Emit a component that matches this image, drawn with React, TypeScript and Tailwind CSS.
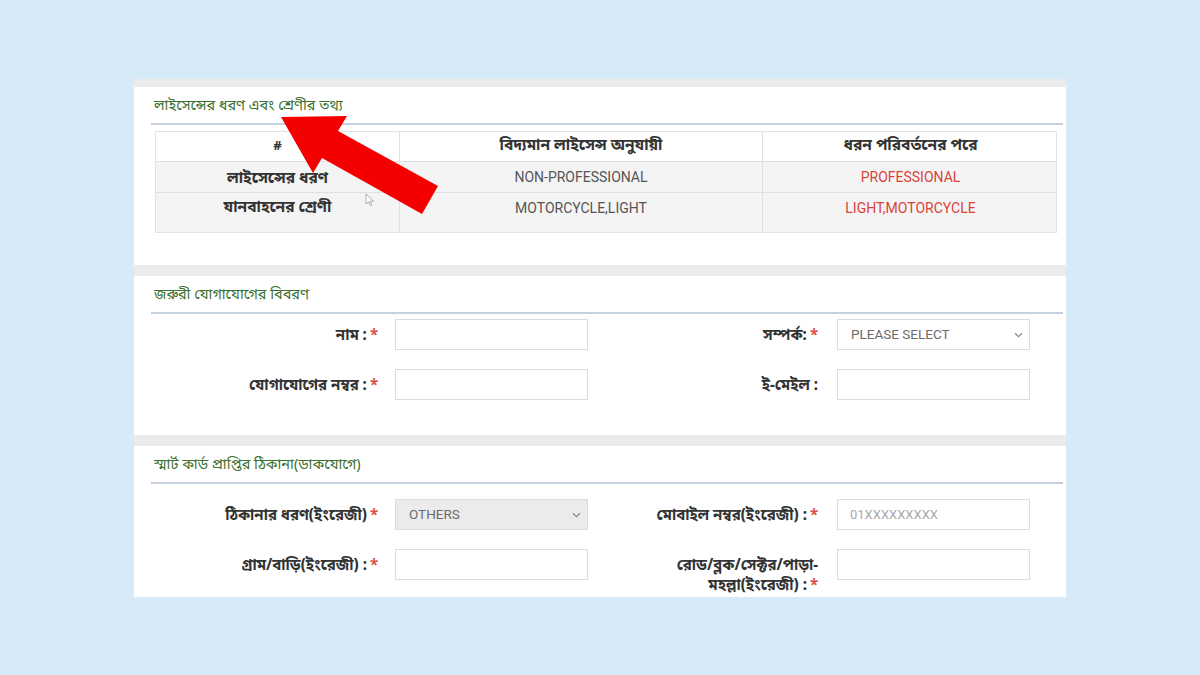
const BN = { fontFamily: '"Noto Sans Bengali","Noto Serif Bengali","Lohit Bengali","FreeSerif","Noto Sans",sans-serif' };
const LAT = { fontFamily: 'Roboto,"Liberation Sans",Arial,sans-serif' };

function Chevron() {
  return (
    <svg width="9" height="6" viewBox="0 0 9 6" className="shrink-0">
      <path d="M1 1.2 L4.5 4.6 L8 1.2" fill="none" stroke="#8a8a8a" strokeWidth="1.2" />
    </svg>
  );
}

function Req() {
  return <span className="text-[#d9534f] ml-[3px]">*</span>;
}

function Label({ children, width, req, tight }: { children: React.ReactNode; width: number; req?: boolean; tight?: boolean }) {
  return (
    <div
      className={`text-right text-[15px] font-bold text-[#333] shrink-0 ${tight ? 'leading-[20px]' : 'leading-[23px]'}`}
      style={{ ...BN, width }}
    >
      {children}
      {req && <Req />}
    </div>
  );
}

function Input({ placeholder, disabled }: { placeholder?: string; disabled?: boolean }) {
  return (
    <div
      className={`w-[193px] h-[31px] border border-[#dcdcdc] shrink-0 flex items-center px-[12px] text-[13px] ${disabled ? 'bg-[#ebebeb]' : 'bg-white'}`}
      style={LAT}
    >
      <span className="text-[#a9a9a9]">{placeholder}</span>
    </div>
  );
}

function Select({ value, disabled }: { value: string; disabled?: boolean }) {
  return (
    <div
      className={`w-[193px] h-[31px] border border-[#dcdcdc] shrink-0 flex items-center justify-between pl-[13px] pr-[6px] text-[13.5px] ${disabled ? 'bg-[#ebebeb]' : 'bg-white'}`}
      style={LAT}
    >
      <span className="text-[#6b6b6b]">{value}</span>
      <Chevron />
    </div>
  );
}

function SectionHead({ title }: { title: string }) {
  return (
    <>
      <div className="h-[36px] pt-[9px] leading-[22px] pl-[20px] text-[14.5px] text-[#3b7031]" style={BN}>
        {title}
      </div>
      <div className="ml-[17px] mr-[3px] h-[2px] bg-[#c3d2de]" />
    </>
  );
}

function FormRow({
  left,
  leftReq,
  leftField,
  right,
  rightReq,
  rightField,
  rightTight,
}: {
  left: React.ReactNode;
  leftReq?: boolean;
  leftField: React.ReactNode;
  right: React.ReactNode;
  rightReq?: boolean;
  rightField: React.ReactNode;
  rightTight?: boolean;
}) {
  return (
    <div className="flex items-start h-[31px]">
      <div className="flex items-start">
        <div className="pt-[6px]">
          <Label width={244} req={leftReq}>{left}</Label>
        </div>
        <div className="ml-[17px]">{leftField}</div>
      </div>
      <div className="flex items-start">
        <div className={rightTight ? 'pt-[7px]' : 'pt-[6px]'}>
          <Label width={230} req={rightReq} tight={rightTight}>{right}</Label>
        </div>
        <div className="ml-[19px]">{rightField}</div>
      </div>
    </div>
  );
}

export default function App() {
  const cell = 'flex items-center justify-center border-r border-[#e0e0e0]';
  return (
    <div className="relative w-[1200px] h-[675px] bg-[#d6eaf8] overflow-hidden pt-[79px] pl-[134px]">
      <div className="w-[932px] h-[518px] bg-[#ebebeb] pt-[8px] flex flex-col gap-[11px]">
        {/* Section 1 */}
        <div className="bg-white h-[178px] shrink-0">
          <SectionHead title="লাইসেন্সের ধরণ এবং শ্রেণীর তথ্য" />
          <div className="ml-[21px] mt-[6px] w-[902px] border border-[#e3e3e3]">
            <div className="grid grid-cols-[244px_363px_295px] h-[30px] bg-white border-b border-[#e0e0e0] text-[15.5px] font-bold text-[#333]" style={BN}>
              <div className={`${cell} text-[13px]`}>#</div>
              <div className={cell}>বিদ্যমান লাইসেন্স অনুযায়ী</div>
              <div className="flex items-center justify-center">ধরন পরিবর্তনের পরে</div>
            </div>
            <div className="grid grid-cols-[244px_363px_295px] h-[31px] bg-[#f4f4f4] border-b border-[#e0e0e0] text-[14px]">
              <div className={`${cell} pt-[5px] text-[15.5px] font-bold text-[#333]`} style={BN}>লাইসেন্সের ধরণ</div>
              <div className={`${cell} text-[#555]`} style={LAT}>NON-PROFESSIONAL</div>
              <div className="flex items-center justify-center text-[#d9443a]" style={LAT}>PROFESSIONAL</div>
            </div>
            <div className="grid grid-cols-[244px_363px_295px] h-[39px] bg-[#f4f4f4] text-[14px]">
              <div className={`${cell} !items-start pt-[4px] text-[15.5px] font-bold text-[#333]`} style={BN}>যানবাহনের শ্রেণী</div>
              <div className={`${cell} !items-start pt-[5px] text-[#555]`} style={LAT}>MOTORCYCLE,LIGHT</div>
              <div className="flex items-start pt-[5px] justify-center text-[#d9443a]" style={LAT}>LIGHT,MOTORCYCLE</div>
            </div>
          </div>
        </div>

        {/* Section 2 */}
        <div className="bg-white h-[159px] shrink-0">
          <SectionHead title="জরুরী যোগাযোগের বিবরণ" />
          <div className="mt-[5px] flex flex-col gap-[19px]">
            <FormRow left="নাম :" leftReq leftField={<Input />} right="সম্পর্ক:" rightReq rightField={<Select value="PLEASE SELECT" />} />
            <FormRow left="যোগাযোগের নম্বর :" leftReq leftField={<Input />} right="ই-মেইল :" rightField={<Input />} />
          </div>
        </div>

        {/* Section 3 */}
        <div className="bg-white flex-1 min-h-0">
          <SectionHead title="স্মার্ট কার্ড প্রাপ্তির ঠিকানা(ডাকযোগে)" />
          <div className="mt-[15px] flex flex-col gap-[19px]">
            <FormRow left="ঠিকানার ধরণ(ইংরেজী)" leftReq leftField={<Select value="OTHERS" disabled />} right="মোবাইল নম্বর(ইংরেজী) :" rightReq rightField={<Input placeholder="01XXXXXXXXX" />} />
            <FormRow
              left="গ্রাম/বাড়ি(ইংরেজী) :"
              leftReq
              leftField={<Input />}
              right={<>রোড/ব্লক/সেক্টর/পাড়া-<br />মহল্লা(ইংরেজী) :</>}
              rightReq
              rightTight
              rightField={<Input />}
            />
          </div>
        </div>
      </div>

      {/* Annotation overlay: red arrow + mouse cursor */}
      <svg className="absolute left-0 top-0 pointer-events-none" width="1200" height="675" viewBox="0 0 1200 675">
        <polygon points="281,117 347,116 338,131 438,186 422,214 322,158 313,173" fill="#f50000" />
        <path d="M366 194 L366 204 L368.6 201.6 L370.4 205.6 L371.8 205 L370 201.2 L373.4 201 Z" fill="#fff" stroke="#9a9a9a" strokeWidth="0.8" />
      </svg>
    </div>
  );
}
